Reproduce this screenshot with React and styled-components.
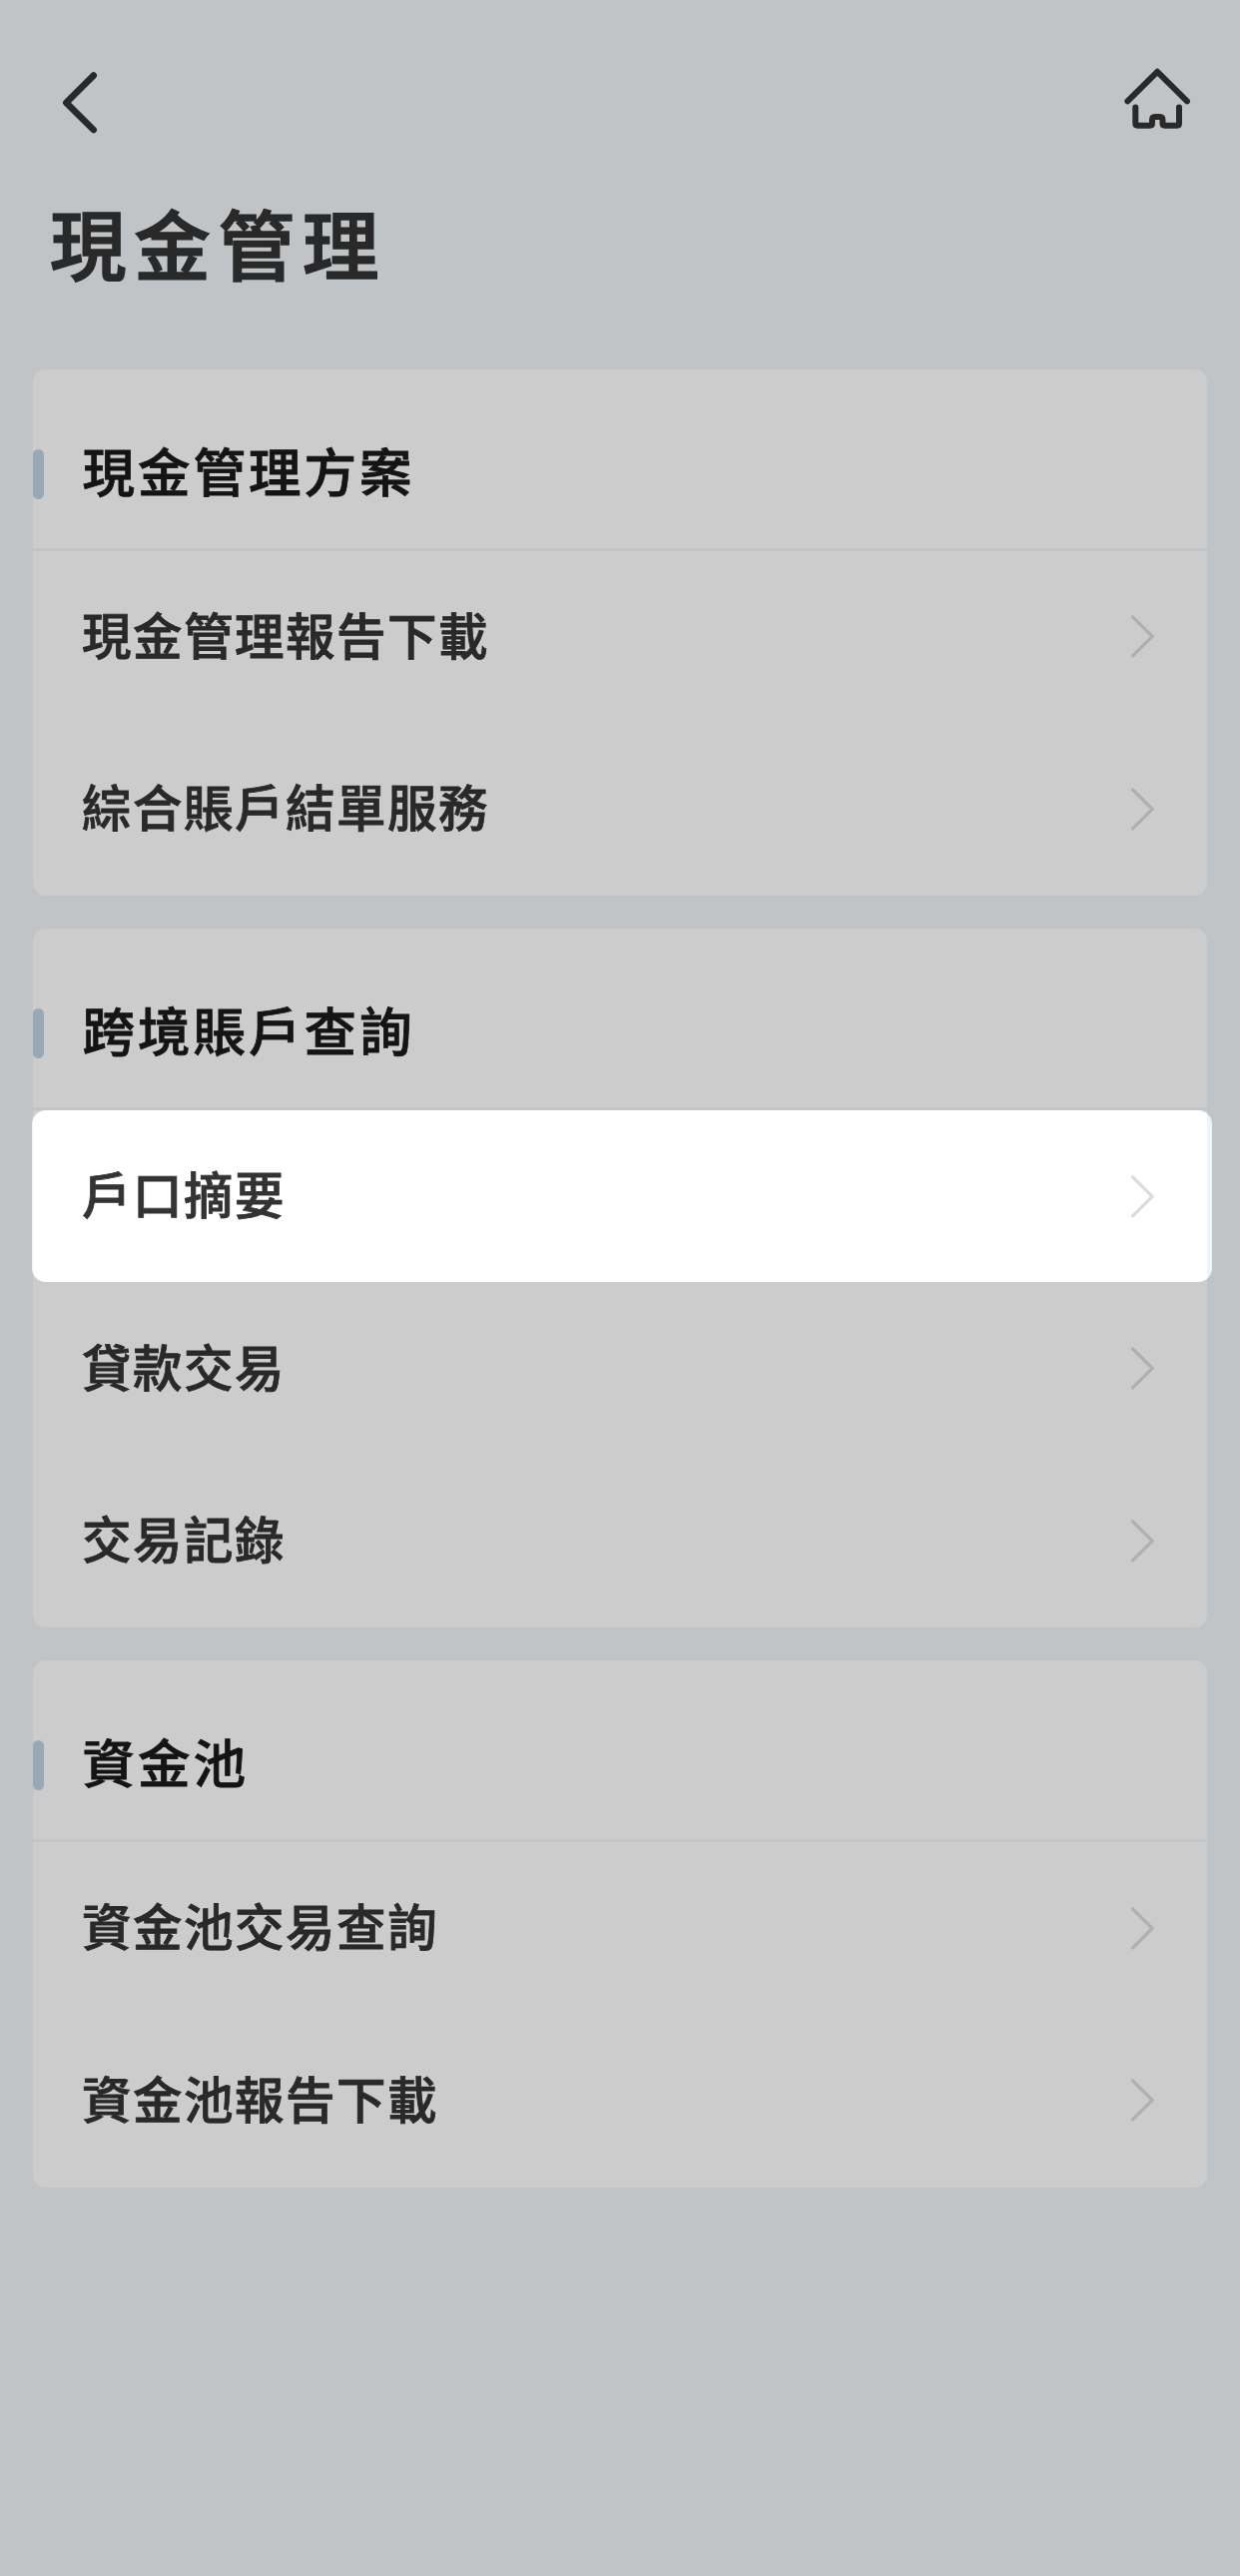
import React from "react";
import styled, { createGlobalStyle } from "styled-components";

const GlobalStyle = createGlobalStyle`
  body {
    margin: 0;
    background: #c0c4c7;
  }
`;

const Page = styled.main`
  box-sizing: border-box;
  width: 1242px;
  min-height: 2580px;
  padding: 0 33px;
  background: #c0c4c7;
  color: #292929;
  font-family: "Noto Sans CJK TC", "Noto Sans", sans-serif;
  font-weight: 500;
`;

const NavBar = styled.nav`
  display: flex;
  align-items: flex-start;
  justify-content: space-between;
  height: 185px;
  padding: 64px 14px 0 24px;
  box-sizing: border-box;
`;

const NavButton = styled.button`
  display: block;
  padding: 0;
  border: 0;
  background: none;
  color: inherit;
`;

const StrokeIcon = styled.svg`
  display: block;
  fill: none;
  stroke: currentColor;
  stroke-width: ${({ $weight }) => $weight || 6};
  stroke-linecap: round;
  stroke-linejoin: round;
`;

const PageTitle = styled.h1`
  height: 185px;
  margin: 0;
  padding: 0 17px;
  box-sizing: border-box;
  font-size: 76.5px;
  font-weight: 500;
  line-height: 114px;
  letter-spacing: 7.8px;
  -webkit-text-stroke: 1.6px currentColor;
`;

const CardList = styled.div`
  display: flex;
  flex-direction: column;
  gap: 33px;
`;

const Card = styled.section`
  border-radius: 13px;
  background: #cccccc;
`;

const CardHeader = styled.header`
  display: flex;
  align-items: center;
  height: 182px;
  padding-top: 30px;
  box-sizing: border-box;
  border-bottom: 3px solid #c1c5c8;
`;

const Marker = styled.span`
  width: 11px;
  height: 50px;
  margin-right: 38.5px;
  border-radius: 5.5px;
  background: #97a9b6;
`;

const CardTitle = styled.h2`
  margin: 0;
  padding-bottom: 9px;
  color: #141414;
  font-size: 52.5px;
  font-weight: 500;
  line-height: 76px;
  letter-spacing: 3px;
  -webkit-text-stroke: 0.8px currentColor;
`;

const Row = styled.a`
  display: flex;
  align-items: center;
  justify-content: space-between;
  height: 172.67px;
  padding: 0 52px 0 49px;
  box-sizing: border-box;
  color: ${({ $active }) => ($active ? "#333333" : "#292929")};

  svg {
    color: ${({ $active }) => ($active ? "#dcdcdc" : "#b0b0b0")};
  }
`;

const RowLabel = styled.span`
  padding-bottom: 7px;
  font-size: 49.5px;
  line-height: 72px;
  letter-spacing: 1.5px;
  -webkit-text-stroke: 0.8px currentColor;
`;

/* Spotlight is a little wider than the card it sits in */
const Spotlight = styled.div`
  height: 172px;
  margin: 0 -5px 0.67px -1px;
  padding: 0 5px 0 1px;
  box-sizing: border-box;
  border-radius: 14px;
  background: linear-gradient(
    to right,
    #eff4f7 1px,
    #ffffff 1px,
    #ffffff calc(100% - 5px),
    #eff4f7 calc(100% - 5px)
  );
`;

const BackIcon = () => (
  <StrokeIcon $weight={6.6} width="44" height="76" viewBox="57 64 44 76">
    <path d="M93.7 75.6L66.3 102.8L93.7 130" />
  </StrokeIcon>
);

const HomeIcon = () => (
  <StrokeIcon width="70" height="68" viewBox="1125 64 70 68">
    <path d="M1129.4 101.4L1159.2 71.8L1189 101.4" />
    <path d="M1137.3 107.5V123.5Q1137.3 125.7 1139.5 125.7H1151.8Q1154 125.7 1154 123.5V120Q1154 117 1157 117H1161.5Q1164.5 117 1164.5 120V123.5Q1164.5 125.7 1166.7 125.7H1178.8Q1181 125.7 1181 123.5V107.5" />
  </StrokeIcon>
);

const ChevronIcon = () => (
  <StrokeIcon $weight={3.4} width="26" height="46" viewBox="0 0 26 46">
    <path d="M3.5 2.9L23.2 22.4L3.5 41.9" />
  </StrokeIcon>
);

const MenuRow = ({ label, active }) => (
  <Row $active={active}>
    <RowLabel>{label}</RowLabel>
    <ChevronIcon />
  </Row>
);

const MenuCard = ({ title, items, activeItem }) => (
  <Card>
    <CardHeader>
      <Marker />
      <CardTitle>{title}</CardTitle>
    </CardHeader>
    {items.map((item) =>
      item === activeItem ? (
        <Spotlight key={item}>
          <MenuRow label={item} active />
        </Spotlight>
      ) : (
        <MenuRow key={item} label={item} />
      )
    )}
  </Card>
);

const sections = [
  {
    title: "現金管理方案",
    items: ["現金管理報告下載", "綜合賬戶結單服務"],
  },
  {
    title: "跨境賬戶查詢",
    items: ["戶口摘要", "貸款交易", "交易記錄"],
  },
  {
    title: "資金池",
    items: ["資金池交易查詢", "資金池報告下載"],
  },
];

const App = () => {
  return (
    <>
      <GlobalStyle />
      <Page lang="zh-Hant">
        <NavBar>
          <NavButton aria-label="返回">
            <BackIcon />
          </NavButton>
          <NavButton aria-label="主頁">
            <HomeIcon />
          </NavButton>
        </NavBar>
        <PageTitle>現金管理</PageTitle>
        <CardList>
          {sections.map((section) => (
            <MenuCard
              key={section.title}
              title={section.title}
              items={section.items}
              activeItem="戶口摘要"
            />
          ))}
        </CardList>
      </Page>
    </>
  );
};

export default App;
